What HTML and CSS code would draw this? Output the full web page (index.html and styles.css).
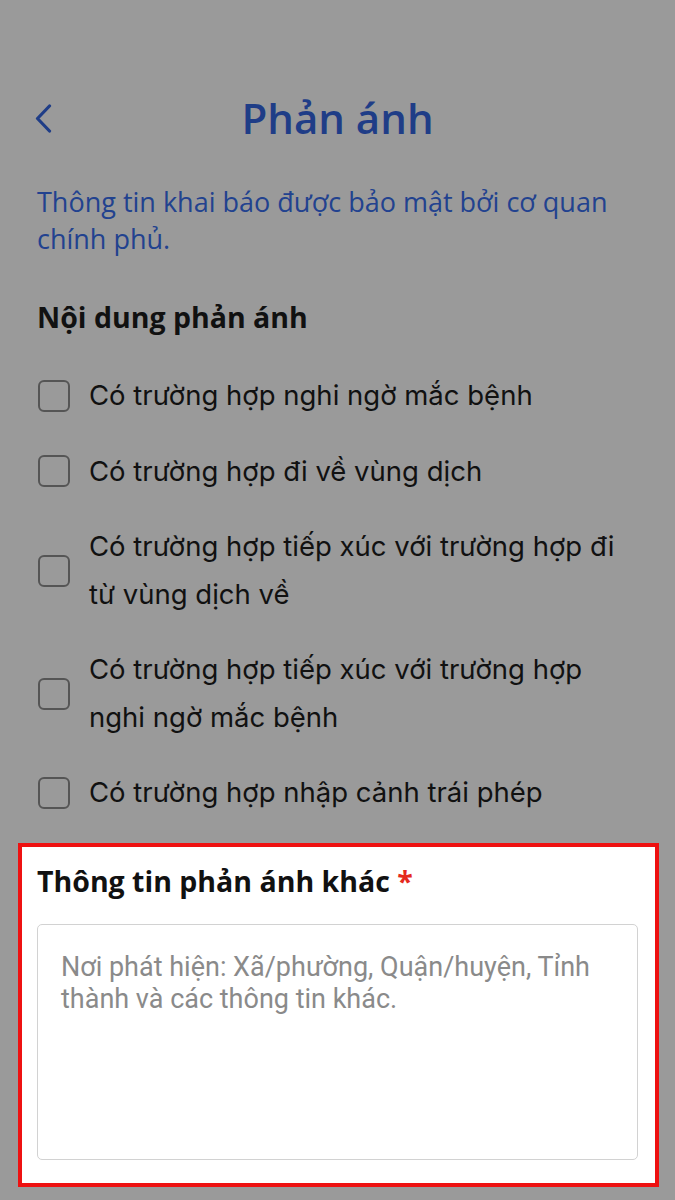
FILE: index.html
```html
<!DOCTYPE html>
<html lang="vi">
<head>
    <meta charset="UTF-8">
    <meta name="viewport" content="width=device-width, initial-scale=1.0">
    <title>Phản ánh</title>
    <link rel="stylesheet" href="styles.css">
</head>
<body>
    <div class="page">
        <div class="header">
            <a class="back" href="#" aria-label="Quay lại">
                <svg width="17" height="29" viewBox="0 0 17 29">
                    <path d="M14.5 2 L2.5 14.5 L14.5 27" fill="none" stroke="#1f3d87" stroke-width="3.2" stroke-linecap="round" stroke-linejoin="round"/>
                </svg>
            </a>
            <h1>Phản ánh</h1>
            <span></span>
        </div>

        <p class="notice">Thông tin khai báo được bảo mật bởi cơ quan chính phủ.</p>

        <h3>Nội dung phản ánh</h3>

        <div class="options">
            <label class="option"><input type="checkbox"><span>Có trường hợp nghi ngờ mắc bệnh</span></label>
            <label class="option"><input type="checkbox"><span>Có trường hợp đi về vùng dịch</span></label>
            <label class="option"><input type="checkbox"><span>Có trường hợp tiếp xúc với trường hợp đi từ vùng dịch về</span></label>
            <label class="option"><input type="checkbox"><span>Có trường hợp tiếp xúc với trường hợp nghi ngờ mắc bệnh</span></label>
            <label class="option"><input type="checkbox"><span>Có trường hợp nhập cảnh trái phép</span></label>
        </div>
    </div>

    <div class="highlight">
        <h3>Thông tin phản ánh khác <span class="required">*</span></h3>
        <textarea class="other" placeholder="Nơi phát hiện: Xã/phường, Quận/huyện, Tỉnh thành và các thông tin khác."></textarea>
    </div>
</body>
</html>
```

FILE: styles.css
```css
body {
    margin: 0;
    background-color: #9a9a9a;
    font-family: "Open Sans", "Noto Sans", sans-serif;
    color: #111;
}
.page {
    padding: 90px 37px 0 37px;
}
.header {
    display: grid;
    grid-template-columns: 1fr auto 1fr;
    align-items: center;
    height: 56px;
}
.back {
    display: flex;
    align-items: center;
    margin-left: -2px;
}
h1 {
    margin: 0;
    font-size: 42px;
    line-height: 56px;
    font-weight: 600;
    color: #1f3d87;
}
.notice {
    margin: 37px 0 0 0;
    font-size: 27px;
    line-height: 37px;
    color: #22428f;
}
h3 {
    margin: 42px 0 0 0;
    font-size: 28.5px;
    line-height: 36px;
    font-weight: 700;
    color: #111;
}
.options {
    display: flex;
    flex-direction: column;
    gap: 28px;
    margin-top: 37px;
}
.option {
    display: flex;
    align-items: center;
    gap: 19px;
    font-family: Inter, "Noto Sans", sans-serif;
    font-size: 27.5px;
    line-height: 47.5px;
    color: #111;
    padding-right: 20px;
}
.option input {
    appearance: none;
    -webkit-appearance: none;
    flex: none;
    width: 32px;
    height: 32px;
    margin: 0 0 0 1px;
    border: 2px solid #555;
    border-radius: 6px;
    box-sizing: border-box;
    background: transparent;
}
.highlight {
    margin: 26px 16px 0 18px;
    border: 4px solid #ee1111;
    background: #fff;
    padding: 16px 17px 23px 15px;
}
.highlight h3 {
    margin: 0;
}
.required {
    color: #e52a1e;
}
.other {
    display: block;
    box-sizing: border-box;
    width: 100%;
    height: 236px;
    margin-top: 25px;
    padding: 26px 20px 0 23px;
    border: 1.5px solid #d2d2d2;
    border-radius: 5px;
    resize: none;
    font-family: Roboto, "Noto Sans", sans-serif;
    font-size: 27px;
    line-height: 32px;
    color: #333;
    background: #fff;
}
.other::placeholder {
    color: #8a8a8a;
}
```
